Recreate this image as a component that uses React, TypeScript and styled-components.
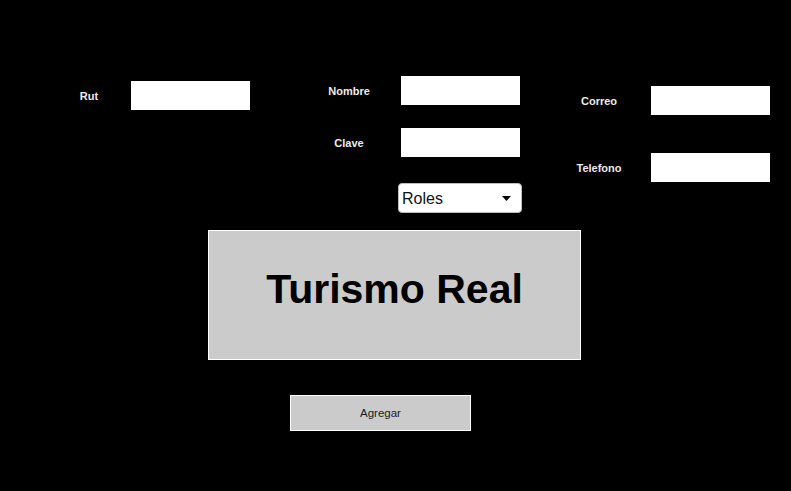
import React, { useState } from 'react';
import styled, { createGlobalStyle } from 'styled-components';

const GlobalStyle = createGlobalStyle`
  html, body {
    margin: 0;
    padding: 0;
    background: #000;
    font-family: 'Liberation Sans', Arial, sans-serif;
  }
`;

const Page = styled.main`
  display: flex;
  flex-direction: column;
  width: 791px;
  height: 491px;
  padding-top: 76px;
  box-sizing: border-box;
  background: #000;
`;

const FieldsRow = styled.div`
  display: flex;
  align-items: flex-start;
`;

const Column = styled.div<{ $left: number; $top: number; $gap: number }>`
  display: flex;
  flex-direction: column;
  margin-left: ${(p) => p.$left}px;
  margin-top: ${(p) => p.$top}px;
  gap: ${(p) => p.$gap}px;
`;

const Field = styled.label`
  display: flex;
  align-items: center;
`;

const LabelText = styled.span<{ $width: number }>`
  width: ${(p) => p.$width}px;
  text-align: center;
  font-size: 11px;
  font-weight: 700;
  color: #ececec;
`;

const TextInput = styled.input`
  width: 119px;
  height: 29px;
  box-sizing: border-box;
  border: none;
  background: #fff;
  padding: 0 4px;
  font-family: inherit;
  font-size: 12px;
  outline: none;
`;

const SelectWrap = styled.div`
  position: relative;
  width: 124px;
  height: 30px;
  margin-left: 101px;
  margin-top: 3px;
`;

const RoleSelect = styled.select`
  appearance: none;
  width: 100%;
  height: 100%;
  box-sizing: border-box;
  border: 1px solid #bdbdbd;
  border-radius: 4px;
  background: #fff;
  color: #111;
  padding: 0 0 0 3px;
  font-family: inherit;
  font-size: 16px;
  outline: none;
`;

const Caret = styled.svg`
  position: absolute;
  right: 11px;
  top: 13px;
  pointer-events: none;
`;

const Banner = styled.div`
  display: flex;
  align-items: center;
  justify-content: center;
  width: 373px;
  height: 130px;
  box-sizing: border-box;
  margin: 17px 0 0 208px;
  padding-bottom: 12px;
  border: 1px solid #fff;
  background: #cbcbcb;
`;

const Title = styled.h1`
  margin: 0;
  font-size: 41px;
  font-weight: 700;
  color: #000;
`;

const AddButton = styled.button`
  width: 181px;
  height: 36px;
  box-sizing: border-box;
  margin: 35px 0 0 290px;
  border: 1px solid #fff;
  background: #cbcbcb;
  color: #1a1a1a;
  font-family: inherit;
  font-size: 11.5px;
  cursor: pointer;
`;

const App: React.FC = () => {
  const [form, setForm] = useState({
    rut: '',
    nombre: '',
    clave: '',
    correo: '',
    telefono: '',
    rol: '',
  });

  const update = (key: keyof typeof form) => (e: React.ChangeEvent<HTMLInputElement | HTMLSelectElement>) =>
    setForm({ ...form, [key]: e.target.value });

  return (
    <>
      <GlobalStyle />
      <Page>
        <FieldsRow>
          <Column $left={47} $top={5} $gap={0}>
            <Field>
              <LabelText $width={84}>Rut</LabelText>
              <TextInput value={form.rut} onChange={update('rut')} />
            </Field>
          </Column>
          <Column $left={47} $top={0} $gap={23}>
            <Field>
              <LabelText $width={104}>Nombre</LabelText>
              <TextInput value={form.nombre} onChange={update('nombre')} />
            </Field>
            <Field>
              <LabelText $width={104}>Clave</LabelText>
              <TextInput type='password' value={form.clave} onChange={update('clave')} />
            </Field>
            <SelectWrap>
              <RoleSelect value={form.rol} onChange={update('rol')}>
                <option value=''>Roles</option>
                <option value='admin'>Administrador</option>
                <option value='cliente'>Cliente</option>
              </RoleSelect>
              <Caret width='9' height='5' viewBox='0 0 9 5'>
                <path d='M0 0 L9 0 L4.5 5 Z' fill='#000' />
              </Caret>
            </SelectWrap>
          </Column>
          <Column $left={25} $top={10} $gap={38}>
            <Field>
              <LabelText $width={104}>Correo</LabelText>
              <TextInput value={form.correo} onChange={update('correo')} />
            </Field>
            <Field>
              <LabelText $width={104}>Telefono</LabelText>
              <TextInput value={form.telefono} onChange={update('telefono')} />
            </Field>
          </Column>
        </FieldsRow>
        <Banner>
          <Title>Turismo Real</Title>
        </Banner>
        <div>
          <AddButton type='button'>Agregar</AddButton>
        </div>
      </Page>
    </>
  );
};

export default App;
